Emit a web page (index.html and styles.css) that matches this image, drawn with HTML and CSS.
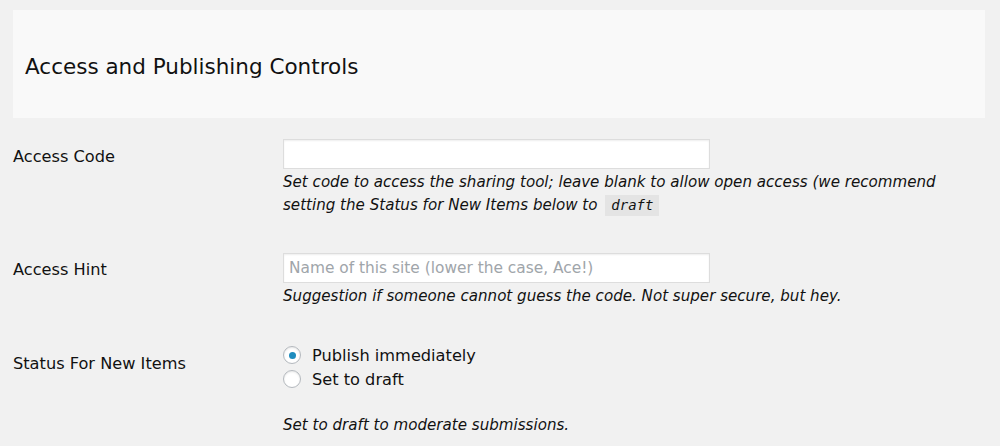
FILE: index.html
```html
<!DOCTYPE html>
<html>
<head>
<meta charset="utf-8">
<link rel="stylesheet" href="styles.css">
</head>
<body>
<div class="page">
  <div class="panel-head"><h2 class="title">Access and Publishing Controls</h2></div>
  <div class="form">
    <div class="row row-code">
      <div class="label">Access Code</div>
      <div class="field">
        <input class="text" type="text">
        <p class="desc">Set code to access the sharing tool; leave blank to allow open access (we recommend setting the Status for New Items below to <code class="code">draft</code></p>
      </div>
    </div>
    <div class="row row-hint">
      <div class="label">Access Hint</div>
      <div class="field">
        <input class="text" type="text" placeholder="Name of this site (lower the case, Ace!)">
        <p class="desc">Suggestion if someone cannot guess the code. Not super secure, but hey.</p>
      </div>
    </div>
    <div class="row row-status">
      <div class="label">Status For New Items</div>
      <div class="field">
        <label class="radio"><span class="dot checked"></span>Publish immediately</label>
        <label class="radio"><span class="dot"></span>Set to draft</label>
        <p class="desc desc-gap">Set to draft to moderate submissions.</p>
      </div>
    </div>
  </div>
</div>
</body>
</html>
```
FILE: styles.css
```css
html, body {
  margin: 0;
  padding: 0;
  background: #f1f1f1;
  font-family: "DejaVu Sans", "Liberation Sans", sans-serif;
  color: #23282d;
}
.page {
  padding: 10px 15px 0 13px;
}
.panel-head {
  background: #f9f9f9;
  height: 108px;
  display: flex;
  align-items: center;
  padding-left: 12px;
}
.title {
  margin: 0;
  font-size: 21.5px;
  font-weight: normal;
  color: #111;
  padding-top: 4px;
}
.form {
  padding-top: 21px;
}
.row {
  display: flex;
}
.label {
  width: 270px;
  font-size: 16.2px;
  line-height: 19px;
  color: #111;
}
.row-code .label { padding-top: 8px; }
.row-hint { margin-top: 36px; }
.row-hint .label { padding-top: 7px; }
.row-status { margin-top: 35px; }
.row-status .label { padding-top: 11px; }
.field {
  flex: 1;
  max-width: 672px;
}
.text {
  display: block;
  box-sizing: border-box;
  width: 427px;
  height: 30px;
  margin: 0;
  border: 1px solid #ddd;
  box-shadow: inset 0 1px 2px rgba(0,0,0,0.07);
  background: #fff;
  font-family: inherit;
  font-size: 15.4px;
  padding: 2px 5px;
  color: #333;
}
.text::placeholder { color: #a0a5aa; }
.desc {
  margin: 2px 0 0;
  font-size: 15.1px;
  font-style: italic;
  line-height: 23px;
  color: #111;
}
.code {
  display: inline-block;
  font-family: "DejaVu Sans Mono", monospace;
  font-style: italic;
  font-size: 14px;
  line-height: 19px;
  background: #e4e4e4;
  padding: 1px 6px;
  margin-left: 3px;
}
.radio {
  display: flex;
  align-items: center;
  font-size: 16.2px;
  color: #111;
  height: 24px;
  gap: 11px;
}
.dot {
  box-sizing: border-box;
  width: 18px;
  height: 18px;
  border-radius: 50%;
  border: 1px solid #b4b9be;
  background: #fff;
  box-shadow: inset 0 1px 2px rgba(0,0,0,0.1);
  display: flex;
  align-items: center;
  justify-content: center;
}
.dot.checked::after {
  content: "";
  width: 7px;
  height: 7px;
  border-radius: 50%;
  background: #1e8cbe;
}
.desc-gap { margin-top: 23px; }
```
